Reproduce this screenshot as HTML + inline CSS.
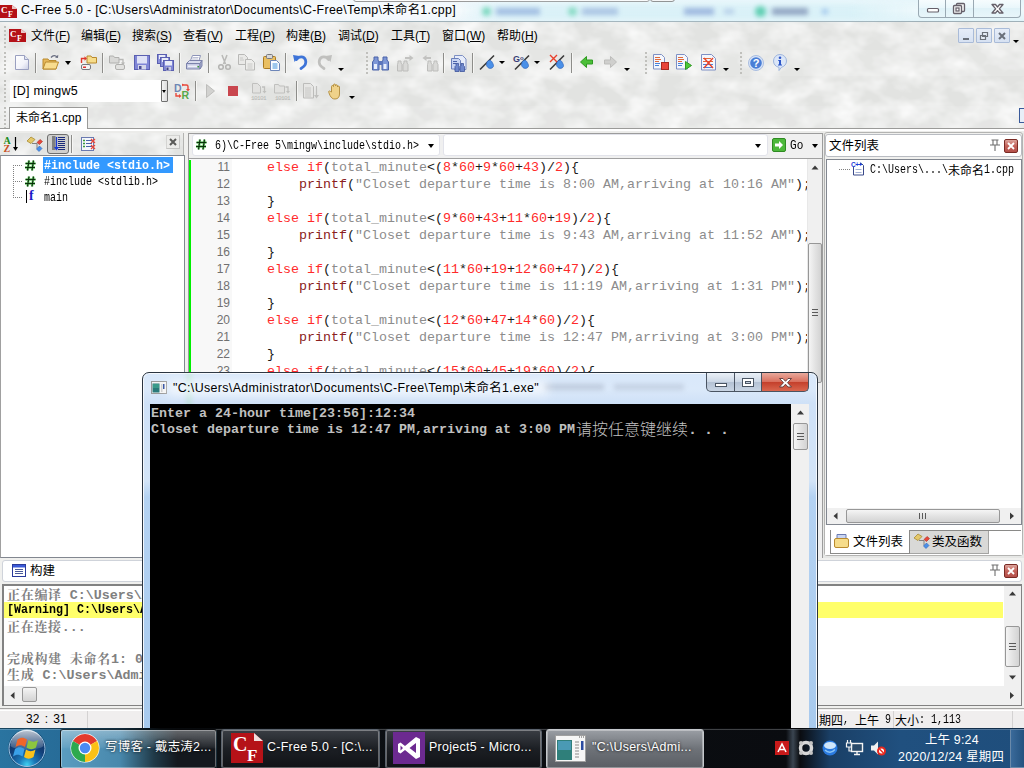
<!DOCTYPE html>
<html lang="zh-CN">
<head>
<meta charset="utf-8">
<title>C-Free 5.0</title>
<style>
*{box-sizing:border-box;margin:0;padding:0}
html,body{width:1024px;height:768px;overflow:hidden}
body{position:relative;background:#e6e7e5;font-family:"Liberation Sans","Noto Sans CJK SC",sans-serif;font-size:12px;color:#000}
.a{position:absolute}
.ui{font-family:"Liberation Sans","Noto Sans CJK SC",sans-serif;font-size:12px;white-space:nowrap;line-height:16px}
.sim{font-family:"Liberation Mono",monospace;font-size:13px;white-space:pre;line-height:16px;height:16px;transform:scaleX(.7692);transform-origin:0 0}
.simb{font-weight:bold;transform:scaleX(.8974)}
.cj{font-family:"Noto Sans CJK SC",sans-serif;font-weight:400;font-size:12px;white-space:pre;line-height:16px;height:16px}
.hash{font-family:"Liberation Mono",monospace;font-weight:bold;font-size:13px;line-height:16px;color:#0a3a0a;text-shadow:.5px 0 #3a8a3a,-.5px 0 #3a8a3a}
.mono{font-family:"Liberation Mono","Noto Sans CJK SC",monospace;white-space:pre}
svg{position:absolute;overflow:visible}
/* texture */
#tex{left:0;top:22px;width:1024px;height:110px;opacity:.55}
/* title bar */
#titlebar{left:0;top:0;width:1024px;height:22px;background:linear-gradient(rgba(255,255,255,.25),rgba(255,255,255,.5) 50%,rgba(255,255,255,.1)),linear-gradient(90deg,#eef4fa 0,#f0f6fb 420px,#e2f3f9 520px,#def3f9 1024px);border-bottom:1px solid #9fb0b8}
#titletext{left:21px;top:2px;font-size:12.4px;line-height:17px;letter-spacing:.3px}
.cap{top:0;height:18px;border:1px solid #9aa9b3;border-top:0;background:linear-gradient(#f6fcfe,#eaf7fb 45%,#e0f2f8 50%,#e8f6fa)}
/* menu */
.menu{top:28px;font-size:12px}
.menu u{text-decoration:underline}
.mdi{top:28px;width:16px;height:15px;border:1px solid #a9bbd8;background:linear-gradient(#e6edf8,#d6e1f2);border-radius:1px}
.sep{width:1px;background:#8d8d8a;border-right:1px solid #f6f6f4;box-sizing:content-box}
.grip{width:2px;margin-left:2px;background-image:repeating-linear-gradient(#c0c0bc 0 2px,transparent 2px 4px)}
.dd{width:0;height:0;border-left:3.5px solid transparent;border-right:3.5px solid transparent;border-top:4px solid #000}
.dds{width:0;height:0;border-left:3px solid transparent;border-right:3px solid transparent;border-top:3px solid #000}
</style>
</head>
<body>
<!-- marble texture behind toolbars -->
<svg class="a" style="left:0;top:22px" width="1024" height="134" viewBox="0 0 1024 134"><filter id="mb" x="0" y="0" width="100%" height="100%"><feTurbulence type="fractalNoise" baseFrequency="0.035 0.05" numOctaves="3" seed="7"/><feColorMatrix type="matrix" values="0 0 0 0 1  0 0 0 0 1  0 0 0 0 1  1.600 0 0 0 -.55"/></filter><rect width="1024" height="134" fill="#e2e3e1"/><rect width="1024" height="134" filter="url(#mb)"/><rect y="28" width="1024" height="26" fill="#fff" opacity=".12"/><rect y="84" width="1024" height="22" fill="#fff" opacity=".1"/></svg>
<!-- ===== TITLE BAR ===== -->
<div id="titlebar" class="a"></div>
<!-- blurred glass reflections -->
<div class="a" style="left:353px;top:-6px;width:297px;height:8px;background:#fbfbfb;border:1px solid #9a9a9a;border-radius:3px;filter:blur(.5px)"></div>
<div class="a" style="left:650px;top:-6px;width:25px;height:8px;background:#f6f6f6;border:1px solid #8a8a8a;border-radius:3px;filter:blur(.5px)"></div>
<div class="a" style="left:470px;top:3px;width:440px;height:17px;filter:blur(2.500px);opacity:.8">
  <div class="a" style="left:-10px;top:1px;width:460px;height:15px;background:linear-gradient(90deg,transparent,#cfeef6 8%,#cfeef6 85%,transparent);opacity:.8"></div>
  <div class="a" style="left:12px;top:4px;width:9px;height:9px;background:#5fd0b0;border-radius:5px"></div>
  <div class="a" style="left:26px;top:5px;width:44px;height:7px;background:#8fb0dc"></div>
  <div class="a" style="left:98px;top:4px;width:9px;height:9px;background:#6fd4b8;border-radius:5px"></div>
  <div class="a" style="left:112px;top:5px;width:36px;height:7px;background:#9ab8de"></div>
  <div class="a" style="left:214px;top:5px;width:30px;height:7px;background:#8aa8d8"></div>
  <div class="a" style="left:254px;top:6px;width:10px;height:5px;background:#a8c4e4"></div>
  <div class="a" style="left:285px;top:3px;width:11px;height:11px;background:#3cc4a0;border-radius:6px"></div>
  <div class="a" style="left:302px;top:5px;width:36px;height:7px;background:#7a90b4"></div>
  <div class="a" style="left:352px;top:6px;width:6px;height:5px;background:#8ab8e8"></div>
</div>
<!-- app icon -->
<svg class="a" style="left:0;top:5px" width="17" height="13" viewBox="0 0 17 13"><path d="M0 0h12l5 4v9H0z" fill="#b41117"/><path d="M12 0l5 4h-5z" fill="#e9c9c9"/><text x="1" y="8" font-family="Liberation Serif,serif" font-weight="bold" font-size="9" fill="#fff">C</text><text x="8" y="12" font-family="Liberation Serif,serif" font-weight="bold" font-size="8" fill="#fff">F</text></svg>
<div id="titletext" class="a ui">C-Free 5.0 - [C:\Users\Administrator\Documents\C-Free\Temp\未命名1.cpp]</div>
<!-- caption buttons -->
<div class="a cap" style="left:918px;width:28px;border-radius:0 0 0 4px"></div>
<div class="a cap" style="left:945px;width:29px"></div>
<div class="a cap" style="left:973px;width:48px;border-radius:0 0 4px 0"></div>
<svg style="left:918px;top:0" width="103" height="18" viewBox="0 0 103 18"><rect x="9.500" y="8.500" width="11" height="3.500" rx="1" fill="#fff" stroke="#66606a" stroke-width="1.200"/><rect x="38.500" y="3.500" width="8" height="8" rx="1" fill="#f4f4f4" stroke="#66606a" stroke-width="1.300"/><rect x="35.500" y="5.500" width="8" height="8" rx="1" fill="#f4f4f4" stroke="#66606a" stroke-width="1.300"/><rect x="38" y="8" width="3" height="3" fill="#fff" stroke="#66606a" stroke-width="1.200"/><path d="M74 4.500h3.500l2 2.500 2-2.500h3.500l-3.700 4.300 3.700 4.200h-3.500l-2-2.400-2 2.400h-3.500l3.700-4.200z" fill="#fff" stroke="#66606a" stroke-width="1.300" stroke-linejoin="round"/></svg>

<!-- ===== MENU BAR ===== -->
<div class="a grip" style="left:2px;top:26px;height:22px"></div>
<svg class="a" style="left:9px;top:29px" width="17" height="13" viewBox="0 0 17 13"><path d="M0 0h12l5 4v9H0z" fill="#b41117"/><path d="M12 0l5 4h-5z" fill="#e9c9c9"/><text x="1" y="8" font-family="Liberation Serif,serif" font-weight="bold" font-size="9" fill="#fff">C</text><text x="8" y="12" font-family="Liberation Serif,serif" font-weight="bold" font-size="8" fill="#fff">F</text></svg>
<div class="a ui menu" style="left:31px">文件(<u>F</u>)</div>
<div class="a ui menu" style="left:81px">编辑(<u>E</u>)</div>
<div class="a ui menu" style="left:132px">搜索(<u>S</u>)</div>
<div class="a ui menu" style="left:183px">查看(<u>V</u>)</div>
<div class="a ui menu" style="left:235px">工程(<u>P</u>)</div>
<div class="a ui menu" style="left:286px">构建(<u>B</u>)</div>
<div class="a ui menu" style="left:338px">调试(<u>D</u>)</div>
<div class="a ui menu" style="left:391px">工具(<u>T</u>)</div>
<div class="a ui menu" style="left:442px">窗口(<u>W</u>)</div>
<div class="a ui menu" style="left:497px">帮助(<u>H</u>)</div>
<!-- MDI buttons -->
<div class="a mdi" style="left:958px"></div>
<div class="a mdi" style="left:976px"></div>
<div class="a mdi" style="left:994px"></div>
<svg style="left:958px;top:28px" width="52" height="14" viewBox="0 0 52 14"><rect x="5" y="10" width="6" height="2" fill="#6a707a"/><path d="M24.500 4.500h5v4h-5zM22.500 7.500h5v4h-5z" fill="#e4ebf6" stroke="#6a707a" stroke-width="1.200"/><path d="M41 5l6 6M47 5l-6 6" stroke="#6a707a" stroke-width="2"/></svg>
<div class="a dds" style="left:1013px;top:40px"></div>
<!-- ===== TOOLBAR 1 ===== -->
<div class="a grip" style="left:2px;top:52px;height:22px"></div>
<!-- new -->
<svg style="left:15px;top:55px" width="14" height="15" viewBox="0 0 14 15"><linearGradient id="gnew" x1="0" y1="0" x2="1" y2="1"><stop offset="0" stop-color="#fff"/><stop offset=".6" stop-color="#f2f3fa"/><stop offset="1" stop-color="#c9cde4"/></linearGradient><path d="M.5.500h9l4 4v10h-13z" fill="url(#gnew)" stroke="#9aa0c0"/><path d="M9.500.500v4h4" fill="#dfe3f2" stroke="#9aa0c0"/></svg>
<div class="a sep" style="left:35px;top:53px;height:20px"></div>
<!-- open -->
<svg style="left:42px;top:54px" width="17" height="16" viewBox="0 0 17 16"><path d="M1 5h5l1 1.500h7V15H1z" fill="#e6b85a" stroke="#b98a2e"/><path d="M1 15l2.500-7H16.500L14 15z" fill="#f8dc8e" stroke="#b98a2e"/><path d="M9 3.500c2-2.500 4.500-2.500 6-.5" fill="none" stroke="#6a6f82" stroke-width="1.300"/><path d="M16.300 0.800l-.3 3.200-3-.5z" fill="#6a6f82"/></svg>
<div class="a dd" style="left:65px;top:61px"></div>
<!-- open project -->
<svg style="left:79px;top:54px" width="18" height="17" viewBox="0 0 18 17"><path d="M8 2h4l1 1.500h4.500V9H8z" fill="#f6dc8a" stroke="#b98a2e"/><rect x="2.500" y="10.500" width="9" height="5" rx="1.500" fill="#f4f4f4" stroke="#77797f"/><rect x="4" y="12.500" width="3" height="1.500" fill="#d33"/><path d="M2.500 9V4.500H6" fill="none" stroke="#e0382c" stroke-width="1.400"/><path d="M5.500 2.300L8 4.500 5.500 6.700z" fill="#e0382c"/></svg>
<div class="a sep" style="left:102px;top:53px;height:20px"></div>
<!-- close project (grey) -->
<svg style="left:109px;top:54px" width="18" height="17" viewBox="0 0 18 17"><path d="M.5 2h4l1 1.500h4.500V9H.5z" fill="#d8d8d6" stroke="#b0b0ae"/><rect x="6.500" y="10.500" width="9" height="5" rx="1.500" fill="#e2e2e0" stroke="#b0b0ae"/><path d="M10 5.500h4V9" fill="none" stroke="#b8b8b6" stroke-width="1.300"/><path d="M11.800 8.500h4.400L14 11z" fill="#b8b8b6"/></svg>
<!-- save -->
<svg style="left:134px;top:55px" width="16" height="15" viewBox="0 0 16 15"><rect x=".5" y=".5" width="15" height="14" fill="#8086d6" stroke="#5a5fb0"/><rect x="3" y="1" width="10" height="7.500" fill="#dfe2f6"/><rect x="4" y="10" width="8" height="4.500" fill="#d4d6ea"/><rect x="5" y="11" width="2.500" height="3" fill="#4a4e96"/></svg>
<!-- save all -->
<svg style="left:157px;top:54px" width="17" height="17" viewBox="0 0 17 17"><rect x=".5" y=".5" width="9" height="9" fill="#8a90da" stroke="#5a5fb0"/><rect x="2" y="1" width="6" height="4" fill="#e8ebf8"/><rect x="3.500" y="3.500" width="9" height="9" fill="#8a90da" stroke="#5a5fb0"/><rect x="5" y="4" width="6" height="4" fill="#e8ebf8"/><rect x="6.500" y="6.500" width="10" height="10" fill="#8086d6" stroke="#5a5fb0"/><rect x="8" y="7" width="7" height="4.500" fill="#e8ebf8"/><rect x="9" y="13" width="5" height="3.500" fill="#c9cbe0"/><rect x="9.500" y="13.500" width="2" height="2.500" fill="#3e4185"/></svg>
<div class="a sep" style="left:179px;top:53px;height:20px"></div>
<!-- print -->
<svg style="left:186px;top:55px" width="17" height="15" viewBox="0 0 17 15"><path d="M4.500 5.500l2-5h8l-1.500 5z" fill="#fff" stroke="#8c93b8"/><path d="M6.500 2.500h6M6 4h6" stroke="#a9afc9" stroke-width=".8"/><path d="M.5 8.500l3-3h12.500l-2 3z" fill="#d8dcee" stroke="#7c83ac"/><path d="M.5 8.500h13.500v5.500H.5z" fill="#c6cbe4" stroke="#7c83ac"/><path d="M14 8.500l2-3v5.500l-2 3z" fill="#aab0d0" stroke="#7c83ac"/><rect x="2" y="10.500" width="9" height="1.500" fill="#eef0f8"/><rect x="11.500" y="11" width="1.500" height="1.500" fill="#3a9a3a"/></svg>
<div class="a sep" style="left:208px;top:53px;height:20px"></div>
<!-- cut (grey) -->
<svg style="left:218px;top:54px" width="13" height="17" viewBox="0 0 13 17"><path d="M4 1l3.500 9M9 1L5.500 10" stroke="#b9b9b7" stroke-width="1.500" fill="none"/><circle cx="3" cy="13" r="2.300" fill="none" stroke="#b4b4b2" stroke-width="1.500"/><circle cx="10" cy="13" r="2.300" fill="none" stroke="#b4b4b2" stroke-width="1.500"/></svg>
<!-- copy (grey) -->
<svg style="left:238px;top:54px" width="18" height="17" viewBox="0 0 18 17"><path d="M.5.500h6l3 3v7h-9z" fill="#e9e9e7" stroke="#b9b9b7"/><path d="M7.500 5.500h6l3 3v7.500h-9z" fill="#ededeb" stroke="#b9b9b7"/><path d="M9.500 10h5M9.500 12h5M9.500 14h5M2 4h3M2 6h4" stroke="#c4c4c2" stroke-width=".9"/></svg>
<!-- paste -->
<svg style="left:263px;top:54px" width="17" height="17" viewBox="0 0 17 17"><rect x=".5" y="2.500" width="12" height="12" rx="1" fill="#e9bf62" stroke="#a97a22"/><rect x="3.500" y=".5" width="6" height="4" rx="1" fill="#d8d8d8" stroke="#77797f"/><path d="M7.500 6.500h6l3 3v7h-9z" fill="#fbfcff" stroke="#6d86b8"/><path d="M9.500 10h5M9.500 12h5M9.500 14h5" stroke="#3f8fdc" stroke-width="1.100"/></svg>
<div class="a sep" style="left:285px;top:53px;height:20px"></div>
<!-- undo -->
<svg style="left:293px;top:54px" width="15" height="16" viewBox="0 0 15 16"><path d="M3.500 5.500C6 2 11 2 12.500 6c1.200 3.500-1 6.500-4.500 8.500" fill="none" stroke="#3e74d8" stroke-width="2.800" stroke-linecap="round"/><path d="M0 1l6.500 1L1.500 8z" fill="#3e74d8"/></svg>
<!-- redo (grey) -->
<svg style="left:317px;top:54px" width="15" height="16" viewBox="0 0 15 16"><path d="M11.500 5.500C9 2 4 2 2.500 6c-1.200 3.500 1 6.500 4.500 8.500" fill="none" stroke="#c0c0be" stroke-width="2.800" stroke-linecap="round"/><path d="M15 1L8.500 2l5 6z" fill="#c0c0be"/></svg>
<div class="a dds" style="left:338px;top:68px"></div>
<div class="a grip" style="left:364px;top:52px;height:22px"></div>
<!-- find (binoculars) -->
<svg style="left:372px;top:56px" width="17" height="15" viewBox="0 0 17 15"><path d="M2 1h4v3l1 2v8H.5V6L2 4zM11 1h4v3l1.500 2v8H10V6l1-2z" fill="#7d96d6" stroke="#4a62a8"/><rect x="6.500" y="5" width="4" height="4" fill="#5a74bc"/><rect x="2" y="8" width="3" height="5" fill="#e8eefc"/><rect x="11.500" y="8" width="3" height="5" fill="#e8eefc"/></svg>
<!-- find next (grey) -->
<svg style="left:397px;top:55px" width="17" height="17" viewBox="0 0 17 17"><path d="M1 6h3v2l1 1.500V16H.5V9.500L1 8zM7 6h3v2l1 1.500V16H6V9.500L7 8z" fill="#dadad8" stroke="#bdbdbb"/><path d="M8 3h5" stroke="#c2c2c0" stroke-width="2"/><path d="M12.500 0L16.500 3l-4 3z" fill="#c2c2c0"/></svg>
<!-- find prev (grey) -->
<svg style="left:422px;top:55px" width="17" height="17" viewBox="0 0 17 17"><path d="M6 6h3v2l1 1.500V16H5.500V9.500L6 8zM12 6h3v2l1 1.500V16H11V9.500l1-1.500z" fill="#dadad8" stroke="#bdbdbb"/><path d="M4 3h5" stroke="#c2c2c0" stroke-width="2"/><path d="M4.500 0L.5 3l4 3z" fill="#c2c2c0"/></svg>
<div class="a sep" style="left:443px;top:53px;height:20px"></div>
<!-- find in files -->
<svg style="left:451px;top:55px" width="16" height="17" viewBox="0 0 16 17"><path d="M3.500.500h8l3.500 3.500v10.500H3.500z" fill="#e6ecfa" stroke="#7e90c4"/><path d="M.5 3.500h7l2 2V14H.5z" fill="#c9d5f2" stroke="#6a7fba"/><path d="M2 6.500h4M2 8.500h3" stroke="#4a62a8"/><path d="M5 8.500h2.500v2l.5 1v5H4v-5l1-1zM10 8.500h2.500v2l1 1v5H9v-5l1-1z" fill="#6f88cc" stroke="#3f559c" stroke-width=".8"/></svg>
<div class="a sep" style="left:472px;top:53px;height:20px"></div>
<!-- bookmark toggle -->
<svg style="left:479px;top:54px" width="17" height="17" viewBox="0 0 17 17"><path d="M1 15.500L15 1.500" stroke="#3a3a3a" stroke-width="1.600"/><path d="M8 8c2-2.500 4-2 5 0 1.500 2.500 2.500 4.500 0 6-2.500 1.200-5-.5-5.500-3z" fill="#4a90e8" stroke="#2e62b8" stroke-width=".7"/></svg>
<div class="a dds" style="left:499px;top:61px"></div>
<svg style="left:513px;top:54px" width="18" height="17" viewBox="0 0 18 17"><path d="M2 15.500L16 1.500" stroke="#3a3a3a" stroke-width="1.600"/><path d="M9 8c2-2.500 4-2 5 0 1.500 2.500 2.500 4.500 0 6-2.500 1.200-5-.5-5.500-3z" fill="#4a90e8" stroke="#2e62b8" stroke-width=".7"/><text x="0" y="8" font-family="Liberation Sans,sans-serif" font-weight="bold" font-size="9" fill="#3a3f78">G</text><text x="7" y="6" font-family="Liberation Sans,sans-serif" font-weight="bold" font-size="6" fill="#3a3f78">o</text></svg>
<div class="a dds" style="left:534px;top:61px"></div>
<svg style="left:549px;top:54px" width="17" height="17" viewBox="0 0 17 17"><path d="M1 15.500L15 1.500" stroke="#3a3a3a" stroke-width="1.600"/><path d="M8 8c2-2.500 4-2 5 0 1.500 2.500 2.500 4.500 0 6-2.500 1.200-5-.5-5.500-3z" fill="#4a90e8" stroke="#2e62b8" stroke-width=".7"/><path d="M1 1l7 7M8 1L1 8" stroke="#e8402c" stroke-width="1.400"/></svg>
<div class="a sep" style="left:571px;top:53px;height:20px"></div>
<!-- nav back / forward -->
<svg style="left:580px;top:56px" width="13" height="12" viewBox="0 0 13 12"><path d="M.5 6L6.500.500v3.500h6v4h-6v3.500z" fill="#4cbf38" stroke="#2f9a22"/></svg>
<svg style="left:604px;top:56px" width="13" height="12" viewBox="0 0 13 12"><path d="M12.500 6L6.500.500v3.500h-6v4h6v3.500z" fill="#cfcfcd" stroke="#bdbdbb"/></svg>
<div class="a dds" style="left:624px;top:68px"></div>
<div class="a grip" style="left:643px;top:52px;height:22px"></div>
<!-- doc icons -->
<svg style="left:653px;top:54px" width="17" height="17" viewBox="0 0 17 17"><path d="M.5.500h8l3 3v11.500H.5z" fill="#f4f6fc" stroke="#7e90c4"/><path d="M2 3.500h5M2 5.500h6M2 7.500h4" stroke="#e06a3a"/><path d="M2 9.500h5M2 11.500h4" stroke="#4a82d8"/><rect x="8.500" y="8.500" width="7" height="7" fill="#e8443a" stroke="#a82a22"/></svg>
<svg style="left:676px;top:54px" width="17" height="17" viewBox="0 0 17 17"><path d="M.5.500h8l3 3v11.500H.5z" fill="#f4f6fc" stroke="#7e90c4"/><path d="M2 3.500h5M2 5.500h6M2 7.500h4" stroke="#e06a3a"/><path d="M2 9.500h5M2 11.500h4" stroke="#4a82d8"/><path d="M9.500 7.500l6 4-6 4z" fill="#4cc838" stroke="#2f9a22"/></svg>
<svg style="left:701px;top:54px" width="16" height="17" viewBox="0 0 16 17"><path d="M.5.500h10l4 4v11.500H.5z" fill="#f4f6fc" stroke="#7e90c4"/><path d="M2 4.500h8M2 7.500h10" stroke="#e06a3a"/><path d="M2 10.500h10M2 13.500h10" stroke="#4a82d8"/><path d="M3 4l9 10M12 4L3 14" stroke="#e8442c" stroke-width="1.400"/></svg>
<div class="a dds" style="left:723px;top:68px"></div>
<div class="a grip" style="left:738px;top:52px;height:22px"></div>
<!-- help / info -->
<svg style="left:748px;top:55px" width="16" height="16" viewBox="0 0 16 16"><circle cx="8" cy="8" r="7.500" fill="#d8e4f8" stroke="#a9bde0"/><circle cx="8" cy="8" r="5.800" fill="#4a7ed6"/><text x="8" y="12" text-anchor="middle" font-family="Liberation Sans,sans-serif" font-weight="bold" font-size="11" fill="#fff">?</text></svg>
<svg style="left:772px;top:54px" width="16" height="17" viewBox="0 0 16 17"><path d="M8 .5a6.500 6.500 0 016.500 6.500c0 3-2 5.500-5 6.300L7 16.500V13.300C3.500 12.800 1.500 10 1.500 7A6.500 6.500 0 018 .5z" fill="#dbe6f8" stroke="#9db4dc"/><circle cx="8" cy="3.800" r="1.300" fill="#2d56c8"/><path d="M6.500 6h2.500v4.500h1v1h-4v-1h1V7h-1z" fill="#2d56c8"/></svg>
<div class="a dds" style="left:794px;top:68px"></div>

<!-- ===== TOOLBAR 2 ===== -->
<div class="a grip" style="left:2px;top:80px;height:22px"></div>
<div class="a" style="left:10px;top:80px;width:151px;height:22px;background:#fff"></div>
<div class="a ui" style="left:13px;top:83px;font-size:12.5px;letter-spacing:.25px">[D] mingw5</div>
<div class="a" style="left:161px;top:80px;width:7px;height:22px;background:linear-gradient(90deg,#f4f4f4,#dcdcdc);border:1px solid #707070;border-radius:1px"></div>
<div class="a dds" style="left:162px;top:90px;border-left-width:2.500px;border-right-width:2.500px"></div>
<!-- D/R -->
<svg style="left:174px;top:83px" width="16" height="16" viewBox="0 0 16 16"><text x="0" y="8.500" font-family="Liberation Sans,sans-serif" font-weight="bold" font-size="10.500" fill="#6e86b4">D</text><text x="7.500" y="16" font-family="Liberation Sans,sans-serif" font-weight="bold" font-size="10.500" fill="#58a84a">R</text><path d="M9 2h3.500c1 0 1.500.5 1.500 1.500V7" fill="none" stroke="#e8483a" stroke-width="1.400"/><path d="M10 1.800L8 .5v3z" fill="#e8483a"/><path d="M12 6l2 2.500L16 6z" fill="#e8483a"/><path d="M2 10v3h3.500" fill="none" stroke="#e8483a" stroke-width="1.400"/><path d="M5 11l2.500 2-2.500 2z" fill="#e8483a"/></svg>
<div class="a sep" style="left:195px;top:81px;height:20px"></div>
<svg style="left:206px;top:84px" width="9" height="14" viewBox="0 0 9 14"><path d="M.5.500l8 6.500-8 6.500z" fill="#d2d2d0" stroke="#bdbdbb"/></svg>
<div class="a" style="left:228px;top:86px;width:10px;height:10px;background:#c9464e"></div>
<svg style="left:251px;top:83px" width="17" height="17" viewBox="0 0 17 17"><path d="M1.500.500h5l3 3v6.500h-8z" fill="#e2e2e0" stroke="#c0c0be"/><path d="M11 4h2.500v4.500" fill="none" stroke="#c0c0be" stroke-width="1.300"/><path d="M11.500 8h4L13.500 10.500z" fill="#c0c0be"/><text x="0" y="16.500" font-family="Liberation Mono,monospace" font-size="6" fill="#b4b4b2" letter-spacing="-.6">10101</text></svg>
<svg style="left:274px;top:83px" width="17" height="17" viewBox="0 0 17 17"><path d="M.5 1.500h4l1 1.500h5v7H.5z" fill="#e2e2e0" stroke="#c0c0be"/><path d="M11.500 4H14v4.500" fill="none" stroke="#c0c0be" stroke-width="1.300"/><path d="M12 8h4L14 10.500z" fill="#c0c0be"/><text x="1" y="16.500" font-family="Liberation Mono,monospace" font-size="6" fill="#b4b4b2" letter-spacing="-.6">10101</text></svg>
<div class="a sep" style="left:296px;top:81px;height:20px"></div>
<svg style="left:303px;top:83px" width="17" height="17" viewBox="0 0 17 17"><path d="M.5.500h7l3 3v11.500h-10z" fill="#e6e6e4" stroke="#bcbcba"/><path d="M2 5h6M2 7h6M2 9h6M2 11h6M2 13h6" stroke="#c4c4c2" stroke-width=".9"/><path d="M13.500 3v10" stroke="#c0c0be" stroke-width="1.200"/><path d="M11 12h5l-2.500 3.500z" fill="#c0c0be"/></svg>
<!-- hand -->
<svg style="left:328px;top:83px" width="15" height="17" viewBox="0 0 15 17"><path d="M3.500 9V3.500c0-1.300 2-1.300 2 0V2c0-1.300 2-1.300 2 0v.8c0-1.300 2-1.300 2 0V4c0-1.200 2-1.200 2 0v7c0 3-1.500 5-4.500 5-2.500 0-3.500-1-5-3.500L.8 9.500c-.8-1.200.8-2.200 1.700-1z" fill="#efd28a" stroke="#b08a3a" stroke-width=".9"/></svg>
<div class="a dds" style="left:349px;top:96px"></div>

<!-- ===== DOCUMENT TAB BAR ===== -->
<div class="a grip" style="left:2px;top:107px;height:22px"></div>
<div class="a" style="left:0;top:128px;width:1024px;height:1px;background:#9a9a98"></div>
<div class="a" style="left:0;top:129px;width:1024px;height:2px;background:#fff"></div><div class="a" style="left:0;top:131px;width:1024px;height:2px;background:#ececea"></div>
<div class="a" style="left:9px;top:107px;width:79px;height:22px;background:#fff;border:1px solid #9a9a98;border-bottom:0"></div>
<div class="a ui" style="left:16px;top:110px;font-size:12px">未命名1.cpp</div>
<div class="a" style="left:1019px;top:108px;width:5px;height:15px;background:#e8eef8;border:1px solid #3a5a9a;border-right:0"></div>
<!-- ===== LEFT TREE PANEL ===== -->
<style>
.pb{background:#fff;border:1px solid #828790}
.trow{left:44px;height:16px;line-height:16px}
.dot-h{height:1px;background-image:repeating-linear-gradient(90deg,#808080 0 1px,transparent 1px 2px)}
.dot-v{width:1px;background-image:repeating-linear-gradient(#808080 0 1px,transparent 1px 2px)}
.sb{background:#f0f0f0}
.thumb{border:1px solid #979797;border-radius:2px;background:linear-gradient(90deg,#f5f5f5,#e3e3e3 50%,#d3d3d3)}
.thumbh{border:1px solid #979797;border-radius:2px;background:linear-gradient(#f5f5f5,#e3e3e3 50%,#d3d3d3)}
</style>
<!-- tree toolbar -->
<svg style="left:3px;top:136px" width="16" height="17" viewBox="0 0 16 17"><text x="0.500" y="7.500" font-family="Liberation Serif,serif" font-weight="bold" font-size="10" fill="#1a8a1a">A</text><text x="0.500" y="15.500" font-family="Liberation Serif,serif" font-weight="bold" font-size="10" fill="#c8501e">Z</text><path d="M12.500 1v11" stroke="#000" stroke-width="1.200"/><path d="M10 11h5l-2.500 4z" fill="#000"/></svg>
<svg style="left:26px;top:136px" width="18" height="17" viewBox="0 0 18 17"><path d="M1 5l4-4 4 2.500-4 4z" fill="#e4c86a" stroke="#a88a2e" stroke-width=".8"/><path d="M6 7.500h5v5" fill="none" stroke="#808080"/><path d="M11 6.500l3-3 2.500 2-3 3z" fill="#e8483a" stroke="#a82a22" stroke-width=".6"/><path d="M10.500 13l3-3 2.500 2.500-3 3z" fill="#4a90e8" stroke="#2e62b8" stroke-width=".6"/></svg>
<div class="a" style="left:47px;top:134px;width:22px;height:20px;border:1px solid #6e6e6e;border-radius:3px;background:#cfcfcd"></div>
<svg style="left:51px;top:136px" width="15" height="16" viewBox="0 0 15 16"><rect x="1" y="0" width="3.500" height="14" fill="#808080"/><path d="M7 1.500h7M7 3.500h7M7 5.500h7M7 7.500h7M7 9.500h7M7 11.500h7M7 13.500h7" stroke="#1a2a7a" stroke-width="1"/><path d="M5.500 1v11" stroke="#1a3ad8" stroke-width="1.300"/><path d="M3 11h5l-2.500 3.500z" fill="#1a3ad8"/></svg>
<div class="a sep" style="left:71px;top:135px;height:18px"></div>
<svg style="left:81px;top:136px" width="16" height="16" viewBox="0 0 16 16"><rect x=".5" y="1.500" width="12" height="13" fill="#f4f6fc" stroke="#6a7ab0"/><path d="M2 4.500h2M2 7.500h2M2 10.500h2" stroke="#3a9a3a" stroke-width="1.400"/><path d="M5 4.500h6M5 7.500h6M5 10.500h6" stroke="#4a62a8"/><path d="M10 3l4 4M14 3l-4 4M10 9l4 4M14 9l-4 4" stroke="#e8483a" stroke-width="1.200"/></svg>
<div class="a" style="left:166px;top:135px;width:14px;height:14px;border:1px solid #d4d4d2;border-right-color:#c4c4c2;border-bottom-color:#c4c4c2;background:#ececea"></div>
<svg style="left:169px;top:138px" width="8" height="8" viewBox="0 0 8 8"><path d="M1 1l6 6M7 1L1 7" stroke="#5a5a58" stroke-width="2"/></svg>
<div class="a" style="left:183px;top:133px;width:1px;height:22px;background:#b4b4b2"></div>
<div class="a" style="left:184px;top:131px;width:4px;height:428px;background:#f0f0ee"></div>
<!-- tree body -->
<div class="a pb" style="left:0;top:155px;width:185px;height:403px;border-left-color:#a0a0a0"></div>
<div class="a dot-v" style="left:13px;top:165px;height:33px"></div>
<div class="a dot-h" style="left:13px;top:165px;width:10px"></div>
<div class="a dot-h" style="left:13px;top:181px;width:10px"></div>
<div class="a dot-h" style="left:13px;top:197px;width:10px"></div>
<svg style="left:25px;top:160px" width="11" height="11" viewBox="0 0 11 11"><path d="M4 .5L2.500 10.500M8.500 .5L7 10.500M.5 3.500h10M0 7.500h10" stroke="#6cc46c" stroke-width="2.300" fill="none"/><path d="M4 .5L2.500 10.500M8.500 .5L7 10.500M.5 3.500h10M0 7.500h10" stroke="#0a300a" stroke-width="1.150" fill="none"/></svg>
<svg style="left:25px;top:176px" width="11" height="11" viewBox="0 0 11 11"><path d="M4 .5L2.500 10.500M8.500 .5L7 10.500M.5 3.500h10M0 7.500h10" stroke="#6cc46c" stroke-width="2.300" fill="none"/><path d="M4 .5L2.500 10.500M8.500 .5L7 10.500M.5 3.500h10M0 7.500h10" stroke="#0a300a" stroke-width="1.150" fill="none"/></svg>
<div class="a" style="left:26px;top:190px;width:1px;height:13px;background:#000"></div>
<div class="a" style="left:29px;top:188px;font-family:'Liberation Serif',serif;font-weight:bold;font-size:14px;color:#1a1ac8;line-height:16px">f</div>
<div class="a" style="left:43px;top:157px;width:130px;height:16px;background:#3399ff"></div>
<div class="a sim simb trow" style="top:158px;color:#fff">#include &lt;stdio.h&gt;</div>
<div class="a sim trow" style="top:174px">#include &lt;stdlib.h&gt;</div>
<div class="a sim trow" style="top:190px">main</div>

<!-- ===== RIGHT FILE LIST PANEL ===== -->
<div class="a" style="left:824px;top:132px;width:199px;height:424px;border:1px solid #b4b4b2;border-radius:3px;background:#f0f0ee"></div>
<div class="a" style="left:825px;top:134px;width:197px;height:23px;background:#fff;border:1px solid #b9bcc2;border-radius:3px"></div>
<div class="a ui" style="left:829px;top:138px;font-size:12.5px">文件列表</div>
<svg style="left:989px;top:139px" width="12" height="13" viewBox="0 0 12 13"><path d="M2.500 1h7M4 1v4.500M8 1v4.500M1 6h10M6 6v6" stroke="#6e6e6e" stroke-width="1.100" fill="none"/></svg>
<div class="a" style="left:1004px;top:139px;width:14px;height:14px;border:1px solid #7a2a24;border-radius:2px;background:linear-gradient(#dca49c,#c4625a 50%,#b4504a)"></div>
<svg style="left:1007px;top:142px" width="8" height="8" viewBox="0 0 8 8"><path d="M1 1l6 6M7 1L1 7" stroke="#fff" stroke-width="1.800"/></svg>
<div class="a pb" style="left:826px;top:159px;width:196px;height:366px"></div>
<div class="a dot-h" style="left:839px;top:169px;width:11px"></div>
<svg style="left:851px;top:161px" width="14" height="15" viewBox="0 0 14 15"><path d="M2.500 2.500h8l2 2v9.500h-10z" fill="#fff" stroke="#3a4a8a"/><path d="M4.500 8.500h6M4.500 11.500h6" stroke="#8a9ac8" stroke-width=".8"/><rect x="0" y="1" width="9" height="5" fill="#fff"/><text x="0" y="6" font-family="Liberation Sans,sans-serif" font-weight="bold" font-size="6.500" fill="#1a3ad8" letter-spacing="-.5">C++</text></svg>
<div class="a sim" style="left:870px;top:162px">C:\Users\...\</div><div class="a cj" style="left:948px;top:162px">未命名</div><div class="a sim" style="left:984px;top:162px">1.cpp</div>
<!-- h scrollbar -->
<div class="a sb" style="left:827px;top:508px;width:194px;height:16px"></div>
<div class="a thumbh" style="left:846px;top:509px;width:154px;height:14px"></div>
<svg style="left:827px;top:508px" width="194" height="16" viewBox="0 0 194 16"><path d="M10.500 4.500v7l-4-3.500zM183 4.500v7l4-3.500z" fill="#3a3a3a"/><path d="M92.500 5v6M95.500 5v6M98.500 5v6" stroke="#5a5a5a"/></svg>
<!-- bottom tabs -->
<div class="a" style="left:825px;top:525px;width:197px;height:30px;background:#fff"></div>
<div class="a" style="left:830px;top:526px;width:191px;height:5px;background:#fff;border-bottom:1px solid #8a8a88"></div>
<div class="a" style="left:830px;top:530px;width:80px;height:24px;background:#fff;border:1px solid #8a8a88;border-top:0"></div>
<div class="a" style="left:910px;top:531px;width:79px;height:23px;background:#d9d9d7;border:1px solid #a4a4a2;border-top:0;border-left:0"></div>
<svg style="left:834px;top:533px" width="16" height="16" viewBox="0 0 16 16"><path d="M3 5V1.500h9V5" fill="#c9d5f2" stroke="#6a7ab0"/><rect x=".5" y="5.500" width="14" height="9" rx="1.500" fill="#f6dc8a" stroke="#b98a2e"/></svg>
<div class="a ui" style="left:853px;top:534px;font-size:12.5px">文件列表</div>
<svg style="left:913px;top:533px" width="18" height="17" viewBox="0 0 18 17"><path d="M1 5l4-4 4 2.500-4 4z" fill="#e4c86a" stroke="#a88a2e" stroke-width=".8"/><path d="M6 7.500h5v5" fill="none" stroke="#808080"/><path d="M11 6.500l3-3 2.500 2-3 3z" fill="#e8483a" stroke="#a82a22" stroke-width=".6"/><path d="M10.500 13l3-3 2.500 2.500-3 3z" fill="#4a90e8" stroke="#2e62b8" stroke-width=".6"/></svg>
<div class="a ui" style="left:932px;top:534px;font-size:12.5px">类及函数</div>
<!-- ===== EDITOR ===== -->
<style>
#ed{left:188px;top:133px;width:635px;height:426px;border:1px solid #9c9c9c;background:#f0f0f0}
#edcode{left:189px;top:159px;width:618px;height:399px;background:#fff;overflow:hidden}
.ln{left:5px;width:36px;text-align:right;font-family:"Liberation Sans",sans-serif;font-size:12px;color:#707070;height:17px;line-height:17px}
.cl{left:46px;height:17px;line-height:17px;font-family:"Liberation Mono",monospace;font-size:13.333px;white-space:pre;color:#1a1a1a}
.k{color:#ff2a2a}.n{color:#ff2a2a}.i{color:#8c8c8c}.s{color:#8c8c8c}.f{color:#8a2020}
</style>
<div id="ed" class="a"></div>
<div class="a" style="left:189px;top:158px;width:633px;height:1px;background:#a0a0a0"></div>
<div class="a" style="left:192px;top:134px;width:248px;height:22px;background:#fff;border:1px solid #e2e3ea;border-radius:3px"></div>
<div class="a" style="left:443px;top:134px;width:325px;height:22px;background:#fff;border:1px solid #e2e3ea;border-radius:3px"></div>
<svg style="left:196px;top:139px" width="11" height="11" viewBox="0 0 11 11"><path d="M4 .5L2.500 10.500M8.500 .5L7 10.500M.5 3.500h10M0 7.500h10" stroke="#6cc46c" stroke-width="2.300" fill="none"/><path d="M4 .5L2.500 10.500M8.500 .5L7 10.500M.5 3.500h10M0 7.500h10" stroke="#0a300a" stroke-width="1.150" fill="none"/></svg>
<div class="a sim" style="left:215px;top:138px">6)\C-Free 5\mingw\include\stdio.h&gt;</div>
<div class="a dd" style="left:428px;top:144px"></div>
<div class="a dd" style="left:755px;top:144px"></div>
<div class="a" style="left:772px;top:138px;width:14px;height:14px;background:#4cb83a;border:1px solid #2f8a22;border-radius:2px"></div>
<svg style="left:775px;top:141px" width="8" height="8" viewBox="0 0 8 8"><path d="M0 2.500h4V0l4 4-4 4V5.500H0z" fill="#fff"/></svg>
<div class="a sim" style="left:790px;top:138px;transform:scaleX(.85)">Go</div>
<div class="a dd" style="left:812px;top:144px"></div>
<div id="edcode" class="a">
<div class="a" style="left:0;top:1px;width:2px;height:400px;background:#00f000"></div>
<div class="a" style="left:2px;top:0;width:41px;height:400px;background:#f8f8f8"></div>
<div class="a ln" style="top:0px">11</div><div class="a cl" style="top:0px">    <span class="k">else</span> <span class="k">if</span>(<span class="i">total_minute</span>&lt;(<span class="n">8</span>*<span class="n">60</span>+<span class="n">9</span>*<span class="n">60</span>+<span class="n">43</span>)/<span class="n">2</span>){</div>
<div class="a ln" style="top:17px">12</div><div class="a cl" style="top:17px">        <span class="f">printf</span>(<span class="s">"Closet departure time is 8:00 AM,arriving at 10:16 AM"</span>);</div>
<div class="a ln" style="top:34px">13</div><div class="a cl" style="top:34px">    }</div>
<div class="a ln" style="top:51px">14</div><div class="a cl" style="top:51px">    <span class="k">else</span> <span class="k">if</span>(<span class="i">total_minute</span>&lt;(<span class="n">9</span>*<span class="n">60</span>+<span class="n">43</span>+<span class="n">11</span>*<span class="n">60</span>+<span class="n">19</span>)/<span class="n">2</span>){</div>
<div class="a ln" style="top:68px">15</div><div class="a cl" style="top:68px">        <span class="f">printf</span>(<span class="s">"Closet departure time is 9:43 AM,arriving at 11:52 AM"</span>);</div>
<div class="a ln" style="top:85px">16</div><div class="a cl" style="top:85px">    }</div>
<div class="a ln" style="top:102px">17</div><div class="a cl" style="top:102px">    <span class="k">else</span> <span class="k">if</span>(<span class="i">total_minute</span>&lt;(<span class="n">11</span>*<span class="n">60</span>+<span class="n">19</span>+<span class="n">12</span>*<span class="n">60</span>+<span class="n">47</span>)/<span class="n">2</span>){</div>
<div class="a ln" style="top:119px">18</div><div class="a cl" style="top:119px">        <span class="f">printf</span>(<span class="s">"Closet departure time is 11:19 AM,arriving at 1:31 PM"</span>);</div>
<div class="a ln" style="top:136px">19</div><div class="a cl" style="top:136px">    }</div>
<div class="a ln" style="top:153px">20</div><div class="a cl" style="top:153px">    <span class="k">else</span> <span class="k">if</span>(<span class="i">total_minute</span>&lt;(<span class="n">12</span>*<span class="n">60</span>+<span class="n">47</span>+<span class="n">14</span>*<span class="n">60</span>)/<span class="n">2</span>){</div>
<div class="a ln" style="top:170px">21</div><div class="a cl" style="top:170px">        <span class="f">printf</span>(<span class="s">"Closet departure time is 12:47 PM,arriving at 3:00 PM"</span>);</div>
<div class="a ln" style="top:187px">22</div><div class="a cl" style="top:187px">    }</div>
<div class="a ln" style="top:204px">23</div><div class="a cl" style="top:204px">    <span class="k">else</span> <span class="k">if</span>(<span class="i">total_minute</span>&lt;(<span class="n">15</span>*<span class="n">60</span>+<span class="n">45</span>+<span class="n">19</span>*<span class="n">60</span>)/<span class="n">2</span>){</div>
</div>
<!-- editor v scrollbar -->
<div class="a sb" style="left:807px;top:159px;width:15px;height:399px;border-left:1px solid #e8e8e8"></div>
<svg style="left:807px;top:158px" width="16" height="20" viewBox="0 0 16 20"><path d="M4.500 11.500h7l-3.500-4z" fill="#3a3a3a"/></svg>
<div class="a thumb" style="left:808px;top:243px;width:14px;height:140px"></div>
<svg style="left:808px;top:306px" width="14" height="12" viewBox="0 0 14 12"><path d="M4 3.500h6M4 6.500h6M4 9.500h6" stroke="#5a5a5a"/></svg>
<!-- ===== BUILD OUTPUT PANEL ===== -->
<style>
.out{font-family:"Liberation Mono","Noto Serif CJK SC",monospace;font-size:13.333px;font-weight:bold;white-space:pre;line-height:16px;height:16px;color:#808080;left:7px}
.out .cj{font-size:13px;letter-spacing:.7px;font-weight:bold;font-family:"Noto Serif CJK SC",serif}
</style>
<div class="a" style="left:0;top:558px;width:1024px;height:152px;background:#f0f0ee"></div>
<div class="a" style="left:2px;top:560px;width:1020px;height:22px;background:#fff;border:1px solid #cfd3da;border-radius:3px"></div>
<svg style="left:12px;top:564px" width="14" height="13" viewBox="0 0 14 13"><rect x=".5" y=".5" width="13" height="12" fill="#fff" stroke="#2a3a9a"/><rect x="1" y="1" width="12" height="2.500" fill="#3a5ad8"/><path d="M3 5.500h8M3 7.500h8M3 9.500h8" stroke="#4a5a9a"/></svg>
<div class="a ui" style="left:30px;top:563px;font-size:12.5px">构建</div>
<svg style="left:989px;top:564px" width="12" height="13" viewBox="0 0 12 13"><path d="M2.500 1h7M4 1v4.500M8 1v4.500M1 6h10M6 6v6" stroke="#6e6e6e" stroke-width="1.100" fill="none"/></svg>
<div class="a" style="left:1004px;top:564px;width:14px;height:14px;border:1px solid #7a2a24;border-radius:2px;background:linear-gradient(#dca49c,#c4625a 50%,#b4504a)"></div>
<svg style="left:1007px;top:567px" width="8" height="8" viewBox="0 0 8 8"><path d="M1 1l6 6M7 1L1 7" stroke="#fff" stroke-width="1.800"/></svg>
<div class="a" style="left:2px;top:584px;width:1020px;height:122px;background:#fff;border:2px solid #828282;border-right-width:1px;border-bottom-width:1px"></div>
<div class="a" style="left:4px;top:602px;width:999px;height:16px;background:#ffff6a"></div>
<div class="a out" style="top:586px"><span class="cj">正在编译</span> C:\Users\Administrator\Documents\C-Free\Temp\<span class="cj">未命名</span>1.cpp...</div>
<div class="a sim simb" style="left:7px;top:602px">[Warning] C:\Users\Administrator\Documents\C-Free\Temp\</div><div class="a cj" style="left:392px;top:602px;font-weight:bold;letter-spacing:1px">未命名</div><div class="a sim simb" style="left:431px;top:602px">1.cpp:38:2: warning: no newline at end of file</div>
<div class="a out" style="top:618px"><span class="cj">正在连接</span>...</div>
<div class="a out" style="top:650px"><span class="cj">完成构建</span> <span class="cj">未命名</span>1: 0 <span class="cj">个错误</span>, 1 <span class="cj">个警告</span></div>
<div class="a out" style="top:666px"><span class="cj">生成</span> C:\Users\Administrator\Documents\C-Free\Temp\<span class="cj">未命名</span>1.exe</div>
<!-- scrollbars -->
<div class="a sb" style="left:1004px;top:586px;width:17px;height:100px"></div>
<svg style="left:1004px;top:586px" width="17" height="100" viewBox="0 0 17 100"><path d="M5 9.500h7l-3.500-4zM5 89.500h7l-3.500 4z" fill="#3a3a3a"/></svg>
<div class="a thumb" style="left:1005px;top:626px;width:15px;height:41px"></div>
<svg style="left:1005px;top:640px" width="15" height="12" viewBox="0 0 15 12"><path d="M4 3.500h7M4 6.500h7M4 9.500h7" stroke="#5a5a5a"/></svg>
<div class="a sb" style="left:4px;top:686px;width:1017px;height:19px"></div>
<svg style="left:4px;top:686px" width="1017" height="19" viewBox="0 0 1017 19"><path d="M10.500 6v7l-4-3.500zM1006 6v7l4-3.500z" fill="#3a3a3a"/></svg>
<div class="a thumbh" style="left:22px;top:687px;width:15px;height:15px"></div>
<!-- ===== STATUS BAR ===== -->
<div class="a" style="left:0;top:708px;width:1024px;height:20px;background:#f0eeee;border-top:1px solid #a4a4a2"></div>
<div class="a" style="left:0;top:710px;width:1024px;height:1px;background:#fff"></div>
<div class="a ui" style="left:26px;top:711px;font-size:12px;word-spacing:2px">32 : 31</div>
<div class="a" style="left:87px;top:711px;width:1px;height:17px;background:#d4d2d2"></div>
<div class="a cj" style="left:807px;top:712px">星期四</div><div class="a sim" style="left:843px;top:712px">,</div><div class="a cj" style="left:855px;top:712px">上午</div><div class="a" style="left:885px;top:712px;width:6px;height:16px;overflow:hidden"><div class="a sim" style="left:0;top:0">9</div></div>
<div class="a" style="left:893px;top:711px;width:1px;height:17px;background:#d4d2d2"></div>
<div class="a cj" style="left:895px;top:712px">大小</div><div class="a sim" style="left:919px;top:712px">: 1,113</div>
<div class="a" style="left:1012px;top:711px;width:1px;height:17px;background:#d4d2d2"></div>
<!-- ===== CONSOLE WINDOW ===== -->
<style>
#con{left:142px;top:372px;width:676px;height:380px;border:1px solid #2a3440;border-radius:7px 7px 0 0;background:linear-gradient(#d9e8fa,#dbe9fa 16px,#cfe1f7 30px,#d3e4f7 108px,#b4d2f2 124px,#a8caee 356px);box-shadow:inset 0 0 0 1px #f4f8fd}
#conblack{left:150px;top:404px;width:641px;height:329px;background:#000}
.ct{font-family:"Liberation Mono","Noto Serif CJK SC",monospace;font-size:13.333px;font-weight:bold;color:#c0c0c0;white-space:pre;line-height:16px;height:16px;left:151px}
.ct .cj{font-family:"Noto Serif CJK SC",serif;font-size:16px;font-weight:normal;letter-spacing:0;line-height:16px}
.cbtn{top:373px;height:19px;border:1px solid #4a5462;border-top:0}
</style>
<div id="con" class="a"></div>
<!-- blurred stuff behind glass -->
<div class="a" style="left:540px;top:380px;width:160px;height:14px;filter:blur(2.500px);opacity:.35"><div class="a" style="left:4px;top:4px;width:60px;height:6px;background:#8a94a8"></div><div class="a" style="left:74px;top:4px;width:70px;height:6px;background:#9aa4b8"></div></div>
<div class="a" style="left:186px;top:373px;width:6px;height:40px;background:#8adc8a;filter:blur(2px);opacity:.22"></div>
<svg style="left:151px;top:381px" width="16" height="13" viewBox="0 0 16 13"><rect x=".5" y=".5" width="15" height="12" fill="#f4f4f4" stroke="#9a9a9a"/><rect x="1.500" y="2.500" width="7" height="9" fill="#2a7a7a"/><rect x="2" y="3" width="6" height="4" fill="#3a9a8a"/><rect x="12" y="3" width="1.500" height="5" fill="#2a4aa0"/><path d="M10 4h1.500M10 6h1.500M10 8h1.500M10 10h1.500" stroke="#8a8a8a" stroke-width=".7"/></svg>
<div class="a" style="left:168px;top:380px;width:380px;height:16px;background:#fff;filter:blur(5px);opacity:.55"></div>
<div class="a ui" style="left:173px;top:380px;font-size:12.4px;letter-spacing:.36px">"C:\Users\Administrator\Documents\C-Free\Temp\未命名1.exe"</div>
<!-- caption buttons -->
<div class="a cbtn" style="left:706px;width:29px;border-radius:0 0 0 5px;background:linear-gradient(#eaf0f7,#cdd8e6 48%,#b4c2d4 52%,#c9d5e4)"></div>
<div class="a cbtn" style="left:734px;width:28px;background:linear-gradient(#eaf0f7,#cdd8e6 48%,#b4c2d4 52%,#c9d5e4)"></div>
<div class="a cbtn" style="left:761px;width:48px;border-radius:0 0 5px 0;background:linear-gradient(#e8a99c,#d9705e 48%,#c4402c 52%,#d9664e)"></div>
<svg style="left:706px;top:373px" width="103" height="19" viewBox="0 0 103 19"><rect x="9.500" y="10.500" width="11" height="3" fill="#fff" stroke="#4a5563"/><rect x="36.500" y="5.500" width="11" height="8" fill="#fff" stroke="#4a5563"/><rect x="39.500" y="8.500" width="5" height="2" fill="#c4cfde" stroke="#4a5563"/><path d="M73.500 5.500h3.500l2.500 2.800 2.500-2.800h3.500l-4 4.200 4 4.300h-3.500l-2.500-2.800-2.500 2.800h-3.500l4-4.300z" fill="#fff" stroke="#5a3a3a" stroke-width=".9"/></svg>
<div id="conblack" class="a"></div>
<div class="a ct" style="top:406px">Enter a 24-hour time[23:56]:12:34</div>
<div class="a ct" style="top:422px">Closet departure time is 12:47 PM,arriving at 3:00 PM</div>
<div class="a ct" style="top:419px;left:576px;font-family:'Noto Sans CJK SC',sans-serif;font-size:16px;font-weight:300;line-height:18px;height:18px">请按任意键继续</div>
<div class="a ct" style="top:423px;left:688px;font-size:15px;letter-spacing:-1px">. . .</div>
<!-- console scrollbar -->
<div class="a sb" style="left:791px;top:404px;width:18px;height:329px"></div>
<svg style="left:792px;top:403px" width="17" height="20" viewBox="0 0 17 20"><path d="M5 11.500h7l-3.500-4z" fill="#3a3a3a"/></svg>
<div class="a thumb" style="left:793px;top:423px;width:15px;height:27px"></div>
<svg style="left:793px;top:430px" width="15" height="12" viewBox="0 0 15 12"><path d="M4 3.500h7M4 6.500h7M4 9.500h7" stroke="#5a5a5a"/></svg>
<!-- ===== TASKBAR ===== -->
<style>
#tb{left:0;top:728px;width:1024px;height:40px;background:linear-gradient(90deg,#2a74a0 0,#276c98 60px,#1e4a66 120px,#0c1014 160px,#0a0c10 800px,#1a3f66 830px,#20507f 900px,#1f4e7c 1024px)}
.tbtn{top:729px;height:40px;border:1px solid rgba(0,0,0,.7);border-radius:3px;box-shadow:inset 0 0 0 1px rgba(255,255,255,.34)}
.tt{color:#fff;font-size:12.4px;top:739px;letter-spacing:.3px;text-shadow:0 0 3px #000}
</style>
<div id="tb" class="a"></div>
<div class="a" style="left:0;top:728px;width:1024px;height:1px;background:rgba(0,0,0,.4)"></div><div class="a" style="left:0;top:729px;width:1024px;height:1px;background:rgba(255,255,255,.22)"></div>
<!-- start orb -->
<svg style="left:7px;top:729px" width="40" height="40" viewBox="0 0 40 40"><defs><radialGradient id="orb" cx=".5" cy=".95" r=".9"><stop offset="0" stop-color="#3fd0f0"/><stop offset=".25" stop-color="#1a78b8"/><stop offset=".6" stop-color="#123f78"/><stop offset="1" stop-color="#0e2f5e"/></radialGradient><linearGradient id="orbh" x1="0" y1="0" x2="0" y2="1"><stop offset="0" stop-color="#fff" stop-opacity=".75"/><stop offset="1" stop-color="#fff" stop-opacity=".12"/></linearGradient></defs><circle cx="20" cy="19.500" r="19" fill="#0c3358" opacity=".55"/><circle cx="20" cy="19.500" r="18" fill="url(#orb)" stroke="#9cc4e4" stroke-width="1"/><path d="M3.500 17a16.500 16.500 0 0133 0c-6 5-27 5-33 0z" fill="url(#orbh)"/><path d="M10.500 10.500c3.500-2.200 6-2.200 9.500 0l-2 7.500c-3.500-2.200-6-2.200-9.500 0z" fill="#f0662a"/><path d="M21.500 11c3.500 2.200 6 2.200 9.500 0l-2 7.500c-3.500 2.200-6 2.200-9.500 0z" fill="#8cc63f"/><path d="M8 20c3.500-2.200 6-2.200 9.500 0l-2 7.500c-3.500-2.200-6-2.200-9.500 0z" fill="#3aa0e8"/><path d="M19 20.500c3.500 2.200 6 2.200 9.500 0l-2 7.500c-3.500 2.200-6 2.200-9.500 0z" fill="#fbc21a"/></svg>
<!-- chrome -->
<div class="a tbtn" style="left:60px;width:157px;background:linear-gradient(rgba(255,255,255,.35),rgba(255,255,255,.08) 45%,rgba(255,255,255,0) 50%),linear-gradient(90deg,#5a9cc0,#4888ac 38%,#203a48 60%,#14181e 75%)"></div>
<svg style="left:70px;top:733px" width="30" height="30" viewBox="0 0 30 30"><circle cx="15" cy="15" r="14.500" fill="#fff"/><path d="M15 15L2.900 8A14 14 0 0127.100 8z" fill="#e33b2e"/><path d="M15 15L27.100 8A14 14 0 0115 29z" fill="#fbc116"/><path d="M15 15L15 29A14 14 0 012.900 8z" fill="#2da94f"/><circle cx="15" cy="15" r="6.500" fill="#fff"/><circle cx="15" cy="15" r="5.200" fill="#4a8af4"/></svg>
<div class="a ui tt" style="left:105px">写博客 - 戴志涛2...</div>
<!-- c-free -->
<div class="a tbtn" style="left:221px;width:159px;background:linear-gradient(#3a3e44,#1c1f24 50%,#101216);border-color:#5a626c"></div>
<svg style="left:231px;top:733px" width="32" height="30" viewBox="0 0 32 30"><path d="M0 0h23l9 8v22H0z" fill="#b51218"/><path d="M23 0l9 8h-9z" fill="#f0dede"/><text x="2" y="18" font-family="Liberation Serif,serif" font-weight="bold" font-size="20" fill="#fff">C</text><text x="16" y="28" font-family="Liberation Serif,serif" font-weight="bold" font-size="17" fill="#fff">F</text></svg>
<div class="a ui tt" style="left:267px">C-Free 5.0 - [C:\...</div>
<!-- visual studio -->
<div class="a tbtn" style="left:385px;width:157px;background:linear-gradient(#3a3e44,#1c1f24 50%,#101216);border-color:#5a626c"></div>
<svg style="left:393px;top:732px" width="32" height="32" viewBox="0 0 32 32"><rect width="32" height="32" fill="#6c2a90"/><path d="M23 5l4 2v18l-4 2-11-9-4.500 3.500L5 20V12l2.500-1.500L12 14zM23 11l-6.500 5 6.500 5zM7.500 13.500v5l2.500-2.500z" fill="#fff" fill-rule="evenodd"/></svg>
<div class="a ui tt" style="left:429px">Project5 - Micro...</div>
<!-- console (active) -->
<div class="a tbtn" style="left:546px;width:158px;background:linear-gradient(#9a9ea4,#6e7278 50%,#5a5e64);border-color:#c4c8cc"></div>
<svg style="left:555px;top:735px" width="31" height="27" viewBox="0 0 31 27"><rect x=".5" y=".5" width="30" height="26" fill="#f6f6f6" stroke="#a0a0a0"/><rect x="2" y="5" width="15" height="20" fill="#2f7f7a"/><rect x="3" y="6" width="13" height="9" fill="#4a9ab4"/><rect x="26" y="6" width="2.500" height="9" fill="#2a4aa0"/><path d="M20 7h4M20 10h4M20 13h4M20 16h4M20 19h4M20 22h4" stroke="#8a8a8a"/><path d="M24 2h1M26 2h1M28 2h1" stroke="#555"/></svg>
<div class="a ui tt" style="left:592px">"C:\Users\Admi...</div>
<div class="a" style="left:786px;top:729px;width:14px;height:39px;background:linear-gradient(90deg,transparent,rgba(170,200,230,.3) 50%,transparent)"></div>
<!-- tray -->
<div class="a" style="left:775px;top:741px;width:14px;height:14px;background:#c81a1a"></div>
<svg style="left:775px;top:741px" width="14" height="14" viewBox="0 0 14 14"><path d="M3 11L7 3l4 8M5 8.500h4" stroke="#fff" stroke-width="1.600" fill="none"/></svg>
<svg style="left:798px;top:740px" width="16" height="16" viewBox="0 0 16 16"><circle cx="8" cy="8" r="5.500" fill="none" stroke="#d8d8d8" stroke-width="3.500"/><circle cx="3" cy="3" r="2" fill="#c4c4c4"/><circle cx="13" cy="3" r="2" fill="#c4c4c4"/><circle cx="3" cy="13" r="2" fill="#c4c4c4"/><circle cx="13" cy="13" r="2" fill="#c4c4c4"/></svg>
<svg style="left:822px;top:740px" width="16" height="16" viewBox="0 0 16 16"><circle cx="8" cy="8" r="7.500" fill="#2a7ae0"/><ellipse cx="8" cy="5.500" rx="6" ry="3.500" fill="#cfe6fb"/><path d="M3 10c3 3 7 3 10-.5" stroke="#8ac4f4" stroke-width="1.500" fill="none"/></svg>
<svg style="left:846px;top:739px" width="18" height="18" viewBox="0 0 18 18"><rect x="5.500" y="4.500" width="11" height="8" fill="#2a4a6a" stroke="#f4f4f4" stroke-width="1.400"/><path d="M8 15.500h6M11 12.500v3" stroke="#f4f4f4" stroke-width="1.400"/><path d="M1.500 1v3M4.500 1v3M.5 4h5v4h-5zM3 8v4h3" stroke="#f4f4f4" stroke-width="1.200" fill="none"/></svg>
<svg style="left:870px;top:740px" width="17" height="17" viewBox="0 0 17 17"><path d="M1 5.500h3L8 1.500v13L4 10.500H1z" fill="#f0f0f0"/><circle cx="11.500" cy="11" r="4.500" fill="#e8281e"/><circle cx="11.500" cy="11" r="2.500" fill="#fff"/><path d="M9.500 9l4 4" stroke="#e8281e" stroke-width="1.500"/></svg>
<div class="a ui" style="left:925px;top:732px;color:#fff;font-size:12.4px;letter-spacing:.2px">上午 9:24</div>
<div class="a ui" style="left:898px;top:749px;color:#fff;font-size:12.4px;letter-spacing:.25px">2020/12/24 星期四</div>
<div class="a" style="left:1010px;top:729px;width:14px;height:39px;border:1px solid #6a8aaa;border-right:0;background:linear-gradient(90deg,#3a6a9a,#24527f)"></div>
</body>
</html>
